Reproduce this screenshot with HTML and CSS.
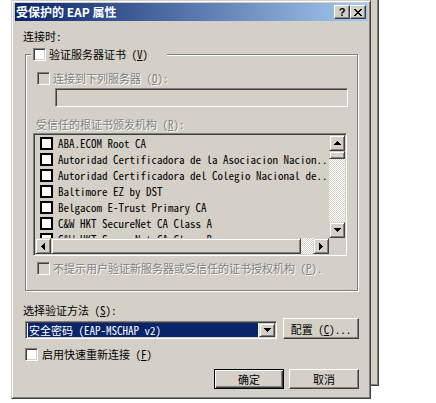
FILE: index.html
```html
<!DOCTYPE html>
<html>
<head>
<meta charset="utf-8" />
<title>受保护的 EAP 属性</title>
<link rel="stylesheet" href="styles.css">
</head>
<body>
<div class="desk">
	<div class="backwin"></div>

	<div class="dlg">
		<div class="title">
			<span class="ttext">受保护的 EAP 属性</span>
			<div class="tbtns">
				<span class="tb help">?</span>
				<span class="tb close">
					<svg width="8" height="7" viewBox="0 0 8 7"><path d="M0 0h2v1h-2zM6 0h2v1h-2zM1 1h2v1h-2zM5 1h2v1h-2zM2 2h4v1h-4zM3 3h2v1h-2zM2 4h4v1h-4zM1 5h2v1h-2zM5 5h2v1h-2zM0 6h2v1h-2zM6 6h2v1h-2z" fill="#000"/></svg>
				</span>
			</div>
		</div>

		<div class="content">
			<div class="lbl">连接时:</div>

			<div class="group">
				<div class="legend"><span class="cb"></span><span>验证服务器证书 (<u>V</u>)</span></div>

				<div class="row dis"><span class="cb off"></span><span>连接到下列服务器 (<u>O</u>):</span></div>
				<div class="field"></div>

				<div class="lbl dis lbl2">受信任的根证书颁发机构 (<u>R</u>):</div>

				<div class="list">
					<div class="items">
						<div class="item"><span class="lcb"></span>ABA.ECOM Root CA</div>
						<div class="item"><span class="lcb"></span>Autoridad Certificadora de la Asociacion Nacion..</div>
						<div class="item"><span class="lcb"></span>Autoridad Certificadora del Colegio Nacional de..</div>
						<div class="item"><span class="lcb"></span>Baltimore EZ by DST</div>
						<div class="item"><span class="lcb"></span>Belgacom E-Trust Primary CA</div>
						<div class="item"><span class="lcb"></span>C&amp;W HKT SecureNet CA Class A</div>
						<div class="item"><span class="lcb"></span>C&amp;W HKT SecureNet CA Class B</div>
					</div>
					<div class="vscroll">
						<span class="sbtn"><svg width="7" height="4"><path d="M3 0h1v1h-1zM2 1h3v1h-3zM1 2h5v1h-5zM0 3h7v1h-7z"/></svg></span>
						<span class="vthumb"></span>
						<span class="track"></span>
						<span class="sbtn"><svg width="7" height="4"><path d="M0 0h7v1h-7zM1 1h5v1h-5zM2 2h3v1h-3zM3 3h1v1h-1z"/></svg></span>
					</div>
					<div class="hscroll">
						<span class="sbtn"><svg width="4" height="7"><path d="M0 3h1v1h-1zM1 2h1v3h-1zM2 1h1v5h-1zM3 0h1v7h-1z"/></svg></span>
						<span class="hthumb"></span>
						<span class="track"></span>
						<span class="sbtn"><svg width="4" height="7"><path d="M0 0h1v7h-1zM1 1h1v5h-1zM2 2h1v3h-1zM3 3h1v1h-1z"/></svg></span>
					</div>
					<div class="corner"></div>
				</div>

				<div class="row dis"><span class="cb off"></span><span>不提示用户验证新服务器或受信任的证书授权机构 (<u>P</u>).</span></div>
			</div>

			<div class="lbl lbl3">选择验证方法 (<u>S</u>):</div>

			<div class="combo-row">
				<div class="combo">
					<div class="cval">安全密码 (EAP-MSCHAP v2)</div>
					<span class="sbtn cdrop"><svg width="7" height="4"><path d="M0 0h7v1h-7zM1 1h5v1h-5zM2 2h3v1h-3zM3 3h1v1h-1z"/></svg></span>
				</div>
				<div class="btn cfg">配置 (<u>C</u>)...</div>
			</div>

			<div class="row r4"><span class="cb"></span><span>启用快速重新连接 (<u>F</u>)</span></div>

			<div class="btns">
				<div class="btn def">确定</div>
				<div class="btn">取消</div>
			</div>
		</div>
	</div>
</div>
</body>
</html>
```

FILE: styles.css
```css
body {
	margin: 0;
	background: #fff;
	font-family: "Noto Sans Mono CJK SC", "Noto Sans CJK SC", sans-serif;
	font-size: 11px;
	color: #000;
}
.desk {
	position: relative;
	width: 436px;
	height: 403px;
	overflow: hidden;
}

/* window that sits behind the dialog */
.backwin {
	position: absolute;
	left: 200px;
	top: -10px;
	width: 179px;
	height: 396px;
	box-sizing: border-box;
	background: #d4d0c8;
	border: 1px solid;
	border-color: #d4d0c8 #404040 #404040 #d4d0c8;
	box-shadow: inset 1px 1px #fff, inset -1px -1px #808080;
}

.dlg {
	position: relative;
	z-index: 1;
	margin-left: 11px;
	width: 360px;
	height: 399px;
	box-sizing: border-box;
	background: #d4d0c8;
	border: 1px solid;
	border-color: #d4d0c8 #404040 #404040 #d4d0c8;
	box-shadow: inset 1px 1px #fff, inset -1px -1px #808080;
	padding: 2px 2px 0 3px;
}

.title {
	display: flex;
	height: 18px;
	background: linear-gradient(to right, #0a246a, #a6caf0);
	color: #fff;
	font-family: "Noto Sans CJK SC", sans-serif;
	font-weight: bold;
	font-size: 12px;
	line-height: 18px;
}
.ttext { padding-left: 1px; }
.tbtns {
	display: flex;
	margin: 2px 2px 0 auto;
}
.tb {
	width: 16px;
	height: 14px;
	box-sizing: border-box;
	display: flex;
	align-items: center;
	justify-content: center;
	background: #d4d0c8;
	border: 1px solid;
	border-color: #fff #404040 #404040 #fff;
	box-shadow: inset -1px -1px #808080;
	color: #000;
	font-family: "Liberation Sans", sans-serif;
	font-size: 11px;
	line-height: 12px;
}

.content {
	padding: 8px 9px 0 8px;
}
.lbl {
	height: 14px;
	line-height: 14px;
	white-space: nowrap;
}
.dis {
	color: #808080;
	text-shadow: 1px 1px 0 #fff;
}

/* etched group box */
.group {
	position: relative;
	margin: 11px 0 0 2px;
	width: 333px;
	height: 237px;
	box-sizing: border-box;
	border: 1px solid #808080;
	box-shadow: inset 1px 1px #fff, 1px 1px #fff;
	padding: 17px 0 0 11px;
}
.legend {
	position: absolute;
	top: -7px;
	left: 5px;
	width: 136px;
	height: 13px;
	box-sizing: border-box;
	padding: 0 2px;
	background: #d4d0c8;
	display: flex;
	align-items: center;
	gap: 3px;
	line-height: 13px;
	white-space: nowrap;
}

.cb {
	flex-shrink: 0;
	width: 13px;
	height: 13px;
	box-sizing: border-box;
	border: 1px solid;
	border-color: #808080 #fff #fff #808080;
	box-shadow: inset 1px 1px #404040, inset -1px -1px #d4d0c8;
	background: #fff;
	text-shadow: none;
}
.cb.off { background: #d4d0c8; }

.row {
	display: flex;
	align-items: center;
	gap: 3px;
	height: 13px;
	line-height: 13px;
	white-space: nowrap;
}
.group .row + .field { margin-top: 3px; }
.list + .row { margin-top: 6px; }

.field {
	margin-left: 18px;
	width: 293px;
	height: 19px;
	box-sizing: border-box;
	border: 1px solid;
	border-color: #808080 #fff #fff #808080;
	box-shadow: inset 1px 1px #404040, inset -1px -1px #d4d0c8;
}
.lbl2 {
	margin: 10px 0 0 -1px;
}

/* list view */
.list {
	margin: 2px 0 0 -4px;
	width: 314px;
	height: 123px;
	box-sizing: border-box;
	border: 1px solid;
	border-color: #808080 #fff #fff #808080;
	box-shadow: inset 1px 1px #404040, inset -1px -1px #d4d0c8;
	padding: 1px;
	display: grid;
	grid-template-columns: 294px 16px;
	grid-template-rows: 103px 16px;
}
.items {
	overflow: hidden;
}
.item {
	display: flex;
	align-items: center;
	gap: 5px;
	height: 16px;
	padding-left: 5px;
	white-space: nowrap;
	font-family: "Noto Sans Mono CJK SC", "Liberation Mono", monospace;
	font-size: 11px;
}
.lcb {
	flex-shrink: 0;
	width: 13px;
	height: 13px;
	box-sizing: border-box;
	border: 1px solid #000;
	box-shadow: inset 1px 1px #000, inset -1px -1px #000;
	background: #fff;
}

.vscroll {
	display: flex;
	flex-direction: column;
}
.hscroll {
	display: flex;
}
.sbtn {
	flex-shrink: 0;
	width: 16px;
	height: 16px;
	box-sizing: border-box;
	display: flex;
	align-items: center;
	justify-content: center;
	background: #d4d0c8;
	border: 1px solid;
	border-color: #d4d0c8 #404040 #404040 #d4d0c8;
	box-shadow: inset 1px 1px #fff, inset -1px -1px #808080;
}
.sbtn svg { fill: #000; display: block; }
.vthumb, .hthumb {
	flex-shrink: 0;
	box-sizing: border-box;
	background: #d4d0c8;
	border: 1px solid;
	border-color: #d4d0c8 #404040 #404040 #d4d0c8;
	box-shadow: inset 1px 1px #fff, inset -1px -1px #808080;
}
.vthumb { height: 8px; }
.hthumb { width: 250px; }
.track {
	flex: 1;
	background: repeating-conic-gradient(#fff 0 25%, #d4d0c8 0 50%) 0 0 / 2px 2px;
}
.corner { background: #d4d0c8; }

.lbl3 {
	margin-top: 12px;
}

.combo-row {
	display: flex;
	align-items: flex-start;
	margin: 4px 0 0 2px;
}
.combo {
	display: flex;
	width: 252px;
	height: 18px;
	box-sizing: border-box;
	border: 1px solid;
	border-color: #808080 #fff #fff #808080;
	box-shadow: inset 1px 1px #404040, inset -1px -1px #d4d0c8;
	padding: 1px;
	background: #fff;
}
.cval {
	flex: 1;
	margin: 0 1px 0 1px;
	padding-left: 1px;
	background: #0a246a;
	color: #fff;
	line-height: 14px;
	white-space: nowrap;
}
.cdrop { height: 14px; }

.btn {
	height: 21px;
	box-sizing: border-box;
	display: flex;
	align-items: center;
	justify-content: center;
	background: #d4d0c8;
	border: 1px solid;
	border-color: #fff #404040 #404040 #fff;
	box-shadow: inset -1px -1px #808080;
	white-space: nowrap;
}
.cfg {
	width: 76px;
	margin: -3px 0 0 6px;
}

.r4 {
	margin: 9px 0 0 2px;
	gap: 4px;
}

.btns {
	display: flex;
	justify-content: flex-end;
	gap: 5px;
	margin-top: 8px;
}
.btns .btn {
	width: 70px;
	height: 20px;
}
.btns .def {
	border-color: #000;
	box-shadow: inset 1px 1px #fff, inset -1px -1px #404040, inset -2px -2px #808080;
}
```
